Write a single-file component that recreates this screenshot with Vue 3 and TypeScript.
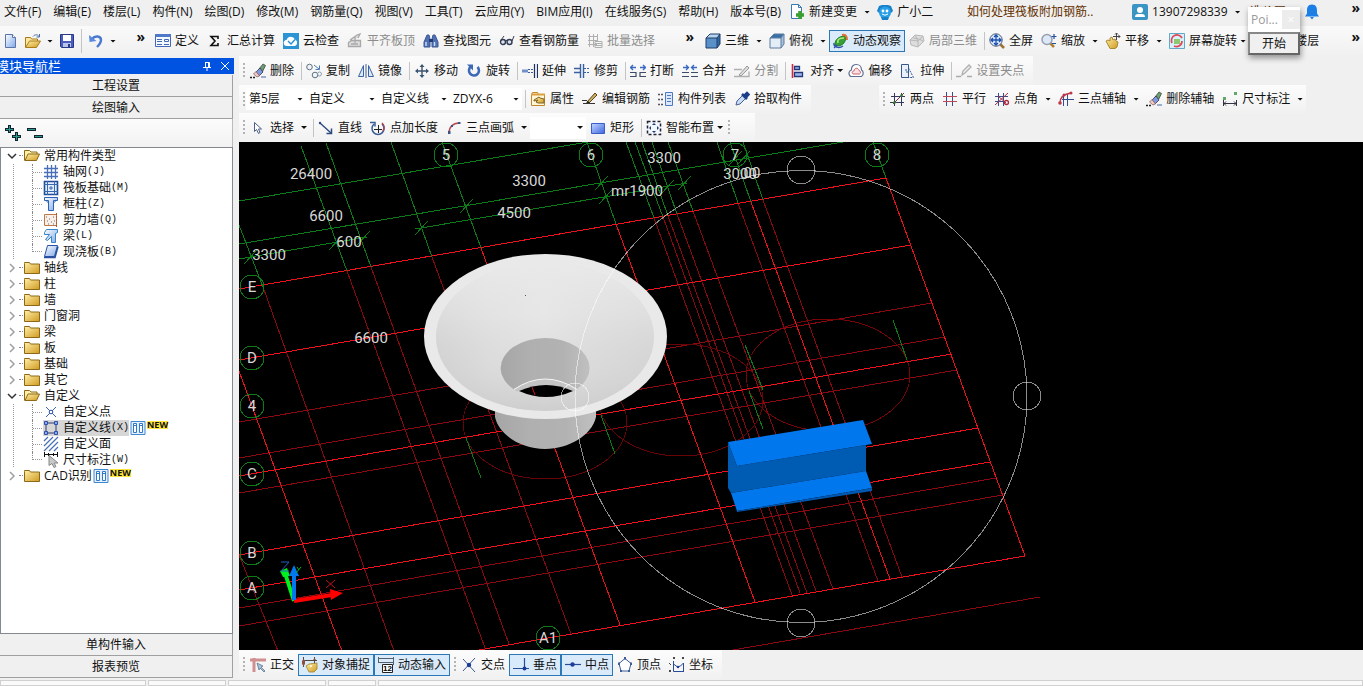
<script setup lang="ts">
interface Tool {
  kind?: 'btn' | 'sep' | 'grip' | 'combo'
  icon?: string
  label?: string
  drop?: 'wide' | 'tight'
  off?: boolean
  on?: boolean
  size?: 'narrow' | 'small' | 'medium'
  name?: string
}
interface Node {
  label: string
  key?: string
  icon: string
  level: 1 | 2
  open?: boolean
  last?: boolean
  selected?: boolean
  fresh?: boolean
}
type Line = [number, number, number, number]

const sep: Tool = { kind: 'sep' }
const grip: Tool = { kind: 'grip' }

const menus = ['文件(F)', '编辑(E)', '楼层(L)', '构件(N)', '绘图(D)', '修改(M)', '钢筋量(Q)', '视图(V)', '工具(T)', '云应用(Y)', 'BIM应用(I)', '在线服务(S)', '帮助(H)', '版本号(B)']

const defineTools: Tool[] = [
  { icon: 'define', label: '定义' },
  { icon: 'sigma', label: '汇总计算' },
  { icon: 'cloud', label: '云检查' },
  { icon: 'flush', label: '平齐板顶', off: true },
  { icon: 'binoc', label: '查找图元' },
  { icon: 'glasses', label: '查看钢筋量' },
  { icon: 'batch', label: '批量选择', off: true },
]
const viewTools: Tool[] = [
  { icon: 'cube', label: '三维', drop: 'wide' },
  { icon: 'topview', label: '俯视', drop: 'wide' },
  { icon: 'orbit', label: '动态观察', on: true },
  { icon: 'part3d', label: '局部三维', off: true },
  sep,
  { icon: 'full', label: '全屏' },
  { icon: 'zoom', label: '缩放', drop: 'wide' },
  { icon: 'pan', label: '平移', drop: 'wide' },
  { icon: 'rotscreen', label: '屏幕旋转', drop: 'tight' },
  { icon: 'floors', label: '选择楼层' },
]
const editTools: Tool[] = [
  grip,
  { icon: 'erase', label: '删除' }, sep,
  { icon: 'copy', label: '复制' },
  { icon: 'mirror', label: '镜像' }, sep,
  { icon: 'move', label: '移动' },
  { icon: 'rotate', label: '旋转' }, sep,
  { icon: 'extend', label: '延伸' },
  { icon: 'trim', label: '修剪' }, sep,
  { icon: 'break', label: '打断' },
  { icon: 'merge', label: '合并' },
  { icon: 'split', label: '分割', off: true }, sep,
  { icon: 'align', label: '对齐', drop: 'tight' },
  { icon: 'offset', label: '偏移' },
  { icon: 'stretch', label: '拉伸' }, sep,
  { icon: 'gripset', label: '设置夹点', off: true },
]
const memberTools: Tool[] = [
  grip,
  { kind: 'combo', label: '第5层', size: 'small', name: '楼层' },
  { kind: 'combo', label: '自定义', size: 'medium', name: '构件类别' },
  { kind: 'combo', label: '自定义线', size: 'medium', name: '构件类型' },
  { kind: 'combo', label: 'ZDYX-6', size: 'medium', name: '构件' },
  sep,
  { icon: 'props', label: '属性' },
  { icon: 'pen', label: '编辑钢筋' },
  { icon: 'list', label: '构件列表' },
  { icon: 'pick', label: '拾取构件' },
]
const axisTools: Tool[] = [
  grip,
  { icon: 'ax2', label: '两点' },
  { icon: 'axpar', label: '平行' },
  { icon: 'axang', label: '点角', drop: 'wide' },
  { icon: 'ax3', label: '三点辅轴', drop: 'wide' },
  { icon: 'erase', label: '删除辅轴' },
  { icon: 'dim', label: '尺寸标注', drop: 'wide' },
]
const drawTools: Tool[] = [
  grip,
  { icon: 'arrow', label: '选择', drop: 'wide' }, sep,
  { icon: 'line', label: '直线' },
  { icon: 'ptlen', label: '点加长度' },
  { icon: 'arc', label: '三点画弧', drop: 'wide' },
  { kind: 'combo', label: '', size: 'narrow', name: '画法' },
  { icon: 'rect', label: '矩形' }, sep,
  { icon: 'smart', label: '智能布置', drop: 'tight' },
  grip,
]
const snapTools: Tool[] = [
  grip,
  { icon: 'ortho', label: '正交' },
  { icon: 'osnap', label: '对象捕捉', on: true },
  { icon: 'dyn', label: '动态输入', on: true },
  grip,
  { icon: 'cross', label: '交点' },
  { icon: 'perp', label: '垂点', on: true },
  { icon: 'mid', label: '中点', on: true },
  { icon: 'penta', label: '顶点' },
  { icon: 'coord', label: '坐标' },
]

const tree: Node[] = [
  { label: '常用构件类型', icon: 'fopen', level: 1, open: true },
  { label: '轴网', key: '(J)', icon: 'tgrid', level: 2 },
  { label: '筏板基础', key: '(M)', icon: 'traft', level: 2 },
  { label: '框柱', key: '(Z)', icon: 'tcol', level: 2 },
  { label: '剪力墙', key: '(Q)', icon: 'twall', level: 2 },
  { label: '梁', key: '(L)', icon: 'tbeam', level: 2 },
  { label: '现浇板', key: '(B)', icon: 'tslab', level: 2, last: true },
  ...['轴线', '柱', '墙', '门窗洞', '梁', '板', '基础', '其它'].map((label): Node => ({ label, icon: 'folder', level: 1 })),
  { label: '自定义', icon: 'fopen', level: 1, open: true },
  { label: '自定义点', icon: 'tpoint', level: 2 },
  { label: '自定义线', key: '(X)', icon: 'tline', level: 2, selected: true, fresh: true },
  { label: '自定义面', icon: 'tface', level: 2 },
  { label: '尺寸标注', key: '(W)', icon: 'tdim', level: 2, last: true },
  { label: 'CAD识别', icon: 'folder', level: 1, fresh: true },
]

const bright: Line[] = [
  [239, 289, 886, 178], [239, 360, 911, 245], [239, 476, 952, 354], [239, 555, 978, 428],
  [239, 590, 990, 462], [473, 651, 1025, 556],
  [886, 178, 1025, 556], [239, 371, 342, 651], [481, 248, 620, 625], [616, 224, 755, 602], [751, 202, 890, 579],
]
const dim: Line[] = [
  [239, 422, 932, 303], [239, 458, 945, 337], [239, 493, 957, 370], [239, 608, 996, 478], [239, 626, 1003, 495],
  [727, 651, 1040, 597], [263, 287, 394, 651], [347, 271, 485, 648], [371, 267, 509, 644], [432, 257, 571, 634],
  [654, 218, 792, 595], [663, 217, 800, 593], [668, 216, 807, 593], [677, 214, 816, 591], [693, 211, 833, 589],
  [738, 203, 878, 581], [763, 200, 902, 577], [239, 555, 278, 651],
]
const green: Line[] = [
  [239, 201, 588, 142], [239, 244, 843, 142], [239, 259, 367, 237], [415, 229, 687, 183],
  [239, 225, 263, 287], [301, 146, 347, 271], [326, 143, 371, 267], [391, 142, 432, 257], [442, 142, 481, 248],
  [587, 142, 616, 224], [626, 142, 654, 218], [635, 142, 663, 217], [642, 142, 668, 216], [652, 142, 677, 214],
  [668, 142, 693, 211], [717, 142, 738, 203], [730, 142, 751, 202], [743, 142, 763, 200], [873, 142, 886, 178],
  [466, 438, 481, 478], [601, 415, 615, 454], [745, 345, 763, 390], [749, 391, 763, 429], [893, 320, 907, 360],
]
const ticks: [number, number][] = [[250, 257], [335, 243], [363, 238], [421, 228], [466, 206], [601, 183], [605, 197], [667, 187], [684, 183], [735, 158], [743, 158]]
const dims: [string, number, number][] = [
  ['26400', 311, 174], ['3300', 529, 181], ['6600', 326, 216], ['4500', 514, 213], ['600', 349, 242],
  ['3300', 269, 255], ['3300', 664, 158], ['6600', 371, 338], ['3000', 740, 174], ['00', 752, 173],
  ['mr1900', 637, 191],
]
const bubbles: [string, number, number][] = [
  ['5', 446, 155], ['6', 591, 155], ['7', 735, 155], ['8', 877, 155], ['E', 252, 287], ['D', 252, 358],
  ['4', 252, 406], ['C', 252, 474], ['B', 252, 553], ['A', 252, 588], ['A1', 548, 638],
]
const handles: [number, number][] = [[801, 170], [801, 623], [1027, 396], [575, 397]]

const bars = [
  { id: 'edit', groups: [editTools] },
  { id: 'member', groups: [memberTools, axisTools] },
  { id: 'draw', groups: [drawTools] },
]
</script>

<template>
  <svg class="defs" aria-hidden="true">
    <defs>
      <linearGradient id="gold" x1="0" y1="0" x2="1" y2="1"><stop offset="0" stop-color="#fff0a8" /><stop offset="1" stop-color="#d09a20" /></linearGradient>
      <linearGradient id="azure" x1="0" y1="0" x2="1" y2="1"><stop offset="0" stop-color="#fff" /><stop offset="1" stop-color="#7fa8e8" /></linearGradient>
      <linearGradient id="blue" x1="0" y1="0" x2="1" y2="1"><stop offset="0" stop-color="#c4d8ff" /><stop offset="1" stop-color="#3c64e0" /></linearGradient>
    </defs>
    <symbol id="new" viewBox="0 0 16 16"><path d="M2.500 1.500h7l3 3v10h-10z" fill="url(#azure)" stroke="#5a74a8" /><path d="M9.500 1.500v3h3" fill="#fff" stroke="#5a74a8" /></symbol>
    <symbol id="open" viewBox="0 0 16 16"><path d="M.5 14V4.500h5l1 1.500h6v3" fill="#ffe9a0" stroke="#a87a18" /><path d="M.5 14.500l4-6.500h11l-4 6.500z" fill="url(#gold)" stroke="#a87a18" /><path d="M8 3.500c2-2.500 5-2 6 0M14.500 1v3h-3" fill="none" stroke="#4a6aa8" /></symbol>
    <symbol id="save" viewBox="0 0 16 16"><path d="M1.500 1.500h13v13h-12l-1-1z" fill="#4a5cc0" stroke="#283888" /><path d="M4 2h8v6H4z" fill="#fff" /><path d="M4 10h8v4H4z" fill="#b8c4e8" /><path d="M9 11h2v3H9z" fill="#283888" /></symbol>
    <symbol id="undo" viewBox="0 0 16 16"><path d="M4 6c3-4 9-3 9 1 0 3-2 5-4 7" fill="none" stroke="#4a78d0" stroke-width="2.400" /><path d="M1 2l.5 7 7-1z" fill="#5a8ae0" /></symbol>
    <symbol id="change" viewBox="0 0 16 16"><path d="M2.500.5h7l3 3v11h-10z" fill="#fff" stroke="#3a7ab0" /><path d="M9.500.5v3h3" fill="none" stroke="#3a7ab0" /><path d="M11 7v8M7 11h8" stroke="#3aa030" stroke-width="3.500" /></symbol>
    <symbol id="mascot" viewBox="0 0 16 16"><path d="M2 2l3-1h6l3 1 2 5-2 2H2L0 7z" fill="#1a80c8" /><circle cx="8" cy="8.500" r="6" fill="#28a0e8" /><circle cx="6" cy="7" r="1.400" fill="#fff" /><circle cx="10" cy="7" r="1.400" fill="#fff" /><path d="M5 10q3 2.500 6 0" stroke="#fff" fill="none" /><path d="M4 13l1 3h6l1-3z" fill="#1a80c8" /></symbol>
    <symbol id="user" viewBox="0 0 16 16"><rect width="16" height="16" rx="2" fill="#3a94c4" /><circle cx="8" cy="6" r="3" fill="#fff" /><path d="M3 13q0-3 3-3h4q3 0 3 3z" fill="#fff" /></symbol>
    <symbol id="bell" viewBox="0 0 16 16"><path d="M8 .5c-4 0-5 3-5 6v3l-2 3h14l-2-3v-3c0-3-1-6-5-6zM6 13h4l-2 2.500z" fill="#1c7fe6" /></symbol>
    <symbol id="define" viewBox="0 0 16 16"><path d="M.5 1.500h15v12H.5z" fill="#f4f8ff" stroke="#4468b8" /><path d="M0 1h16v3H0z" fill="#5078c8" /><path d="M2 6.500h5M2 8.500h5M2 11.500h5M9 11.500h5" stroke="#4468b8" /><path d="M9.500 6.500h4v2h-4z" fill="none" stroke="#4468b8" /></symbol>
    <symbol id="sigma" viewBox="0 0 16 16"><path d="M11 6V3.500H4L8 8l-4 4.500h7V10" fill="none" stroke="#111" stroke-width="1.600" /></symbol>
    <symbol id="cloud" viewBox="0 0 16 16"><rect width="16" height="16" fill="#2a94d4" /><path d="M4 13a3 3 0 0 1-.5-6 4.500 4.500 0 0 1 8.500-.5A3.500 3.500 0 0 1 12 13z" fill="#fff" /><path d="M5 8l3 3 4-4.500" fill="none" stroke="#2a94d4" stroke-width="1.500" /></symbol>
    <symbol id="flush" viewBox="0 0 16 16"><path d="M1.500 9.500l3-2h9v6h-12zM3 7l7-5 3-1-2 4M8 4v6M4 11h7" fill="#ddd" stroke="#a8a8a8" stroke-width="1.300" /></symbol>
    <symbol id="binoc" viewBox="0 0 16 16"><path d="M4 2h2l1 4v8H1V9zM10 2h2l3 7v5H9V6z" fill="#5070b0" stroke="#3c5898" /><path d="M6 6h4v3H6z" fill="#203c78" /><path d="M3 9v4M11.500 9v4" stroke="#c8d8f8" stroke-width="1.500" /></symbol>
    <symbol id="glasses" viewBox="0 0 16 16"><circle cx="4" cy="9" r="2.500" fill="#dce4f0" stroke="#333c50" stroke-width="1.400" /><circle cx="10.500" cy="9" r="2.500" fill="#dce4f0" stroke="#333c50" stroke-width="1.400" /><path d="M6 8l2.500-1M2 7l3-4M13 8l2-5" fill="none" stroke="#333c50" /></symbol>
    <symbol id="batch" viewBox="0 0 16 16"><path d="M1 3.500h9M1 7.500h9M1 11.500h9M2.500 1v13M6.500 1v13M10.500 1v8M8 8.500h7v6H8zM8 10.500h7M8 12.500h7" fill="none" stroke="#b0b0b0" /></symbol>
    <symbol id="cube" viewBox="0 0 16 16"><path d="M1 5l4-4h10l-3 4z" fill="#b8d4f0" /><path d="M1 5h11v10H1z" fill="#5a90c8" /><path d="M12 5l3-4v10l-3 4z" fill="#3468a0" /><path d="M1 5l4-4h10v10l-3 4H1zM1 5h11v10M12 5l3-4" fill="none" stroke="#1c3c68" /></symbol>
    <symbol id="topview" viewBox="0 0 16 16"><path d="M1 5l4-4h10l-3 4z" fill="#3a70a8" /><path d="M1 5h11v10H1z" fill="#e4eef8" /><path d="M12 5l3-4v10l-3 4z" fill="#a8c0d8" /><path d="M1 5l4-4h10v10l-3 4H1zM1 5h11v10M12 5l3-4" fill="none" stroke="#5c7ca0" /></symbol>
    <symbol id="orbit" viewBox="0 0 16 16"><path d="M2 13C1 7 6 3 12 3c2 5-2 10-8 10z" fill="#35a035" stroke="#207828" /><path d="M5 10c-1-4 2-5 6-5" fill="none" stroke="#b0e880" stroke-width="1.500" /><path d="M9 2q5-1 5 5" stroke="#e07030" stroke-width="2" fill="none" /><path d="M1 10c-1 4 5 6 9 3M1 15l3-3" stroke="#3050b0" fill="none" stroke-width="1.300" /></symbol>
    <symbol id="part3d" viewBox="0 0 16 16"><path d="M1 7l5-5 8 1 1 5-6 6-7-2z" fill="#ddd" stroke="#b8b8b8" /><path d="M6 2l3 6v6M1 7l8 1 5-5M4 5l6 1 4 2" fill="none" stroke="#b8b8b8" /></symbol>
    <symbol id="full" viewBox="0 0 16 16"><path d="M11 11l4 4" stroke="#a07030" stroke-width="2.500" /><circle cx="7" cy="7" r="6.200" fill="#e0edff" stroke="#4a5878" /><path d="M7 2v10M2 7h10M5 4l2-2 2 2M5 10l2 2 2-2M4 5L2 7l2 2M10 5l2 2-2 2" fill="none" stroke="#1c50b0" stroke-width="1.300" /></symbol>
    <symbol id="zoom" viewBox="0 0 16 16"><path d="M9 10l4 4" stroke="#b08030" stroke-width="2.500" /><circle cx="6" cy="6.500" r="5" fill="#dce8f8" stroke="#98a0b0" stroke-width="1.500" /><path d="M13 1v5M10.500 3.500h5M11 10.500h4" stroke="#2050a0" stroke-width="1.200" /></symbol>
    <symbol id="pan" viewBox="0 0 16 16"><path d="M1 8l2-1 2 1V5l2-1 1 3 2-1 1 2 2 1-1 5-2 1.500H5z" fill="url(#gold)" stroke="#a88830" /><path d="M11.500 0v7M8 3.500h7M10 1.500L11.500 0 13 1.500M13.500 2L15 3.500 13.500 5" stroke="#444" fill="none" /></symbol>
    <symbol id="rotscreen" viewBox="0 0 16 16"><path d="M.5.5h15v15H.5z" fill="#d8f0f8" stroke="#60a8c8" /><path d="M5 6h6v5H5z" fill="#8cc870" /><path d="M3 10A5.500 5.500 0 0 1 13 5M13 8A5.500 5.500 0 0 1 5 13" fill="none" stroke="#e04858" stroke-width="1.700" /></symbol>
    <symbol id="floors" viewBox="0 0 16 16"><path d="M1 5l7-4 7 4-7 4zM1 10l7 4 7-4" fill="#b8d0f0" stroke="#4868a8" /></symbol>
    <symbol id="erase" viewBox="0 0 16 16"><path d="M0 14.500h6" stroke="#222" stroke-width="1.300" stroke-dasharray="2 1" /><path d="M11 13.500h5v1h-5z" fill="#4468a8" /><path d="M9 6l4-5 2.500 1.500-3 6z" fill="#68a070" stroke="#444" stroke-width=".8" /><path d="M6 9l4-4 3 4-4 4z" fill="#8098e0" stroke="#334" stroke-width=".8" /><path d="M3.500 11L6 8.500 9.500 13 7 14z" fill="#f4c8c0" stroke="#866" stroke-width=".8" /></symbol>
    <symbol id="copy" viewBox="0 0 16 16"><circle cx="3.500" cy="4" r="2.800" fill="#f0f4f8" stroke="#607080" /><circle cx="9" cy="12" r="2.800" fill="#f0f4f8" stroke="#607080" /><circle cx="13.500" cy="11" r="2" fill="none" stroke="#90a0b0" /><path d="M8 2l5 4M13.500 2.500v4h-4" fill="none" stroke="#4878b8" /></symbol>
    <symbol id="mirror" viewBox="0 0 16 16"><path d="M5.500 2.500v11h-5zM10.500 2.500v11h5z" fill="#dce8f8" stroke="#3c64a0" /><path d="M8 1v14" stroke="#3c64a0" /></symbol>
    <symbol id="move" viewBox="0 0 16 16"><path d="M8 2v12M2 8h12" stroke="#3c5470" stroke-width="1.400" /><path d="M5.500 4L8 1l2.500 3zM5.500 12L8 15l2.500-3zM4 5.500L1 8l3 2.500zM12 5.500L15 8l-3 2.500z" fill="#3c5470" /></symbol>
    <symbol id="rotate" viewBox="0 0 16 16"><path d="M5 3.500A5 5 0 1 0 11.500 4" fill="none" stroke="#3c68b8" stroke-width="2.600" /><path d="M1 1.500h6v6z" fill="#3c68b8" /></symbol>
    <symbol id="extend" viewBox="0 0 16 16"><path d="M0 6.500h6v3H0z" fill="#7090c8" /><path d="M6 6.500h5M6 9.500h5" stroke="#3c5ca0" stroke-dasharray="2 1" /><path d="M12.500 1v14M15.500 1v14" stroke="#203060" stroke-width="1.200" /></symbol>
    <symbol id="trim" viewBox="0 0 16 16"><path d="M0 5.500h6M0 9.500h6M6.500 1v14M9.500 1v14" stroke="#3860a0" stroke-width="1.400" /><path d="M10 5.500h5M10 9.500h5" stroke="#3860a0" stroke-dasharray="2 1" /></symbol>
    <symbol id="break" viewBox="0 0 16 16"><path d="M0 9.500h6v4H0M16 9.500h-6v4h6" fill="none" stroke="#3c4c68" stroke-width="1.200" /><path d="M1 4.500h5M10 4.500h5M3 2L.5 4.500 3 7M13 2l2.500 2.500L13 7" fill="none" stroke="#3868c0" stroke-width="1.300" /></symbol>
    <symbol id="merge" viewBox="0 0 16 16"><path d="M0 9.500h7M0 13.500h7M9 9.500h7M9 13.500h7" stroke="#3c4c68" stroke-width="1.200" /><path d="M1 4.500h5M10 4.500h5M4 2l2.500 2.500L4 7M12 2L9.500 4.500 12 7" fill="none" stroke="#3868c0" stroke-width="1.300" /></symbol>
    <symbol id="split" viewBox="0 0 16 16"><path d="M0 6.500h8M0 13.500h15v-5" fill="none" stroke="#b0b0b0" stroke-width="1.400" /><path d="M5 12l8-9 2 2-8 8z" fill="#ddd" stroke="#999" /></symbol>
    <symbol id="align" viewBox="0 0 16 16"><path d="M2.500 1v14" stroke="#d02840" stroke-width="1.600" /><path d="M4.500 3.500h5v3h-5zM4.500 9.500h8v4h-8z" fill="#a0b8e8" stroke="#20387c" stroke-width="1.300" /></symbol>
    <symbol id="offset" viewBox="0 0 16 16"><path d="M2.500 13.500c-3-3-1-6 1-6.500C3 3 6 1.500 8.500 1.500s5 2 5 5.500c2 1 2.500 5 0 6.500z" fill="#fff" stroke="#607090" stroke-width="1.200" /><path d="M5 11c-2-2 0-3 1-3 0-3 4-4 5-.5 2 .5 2 3 .5 3.500z" fill="#fbe0e0" stroke="#d06070" /></symbol>
    <symbol id="stretch" viewBox="0 0 16 16"><path d="M1.500 1.500h7v13h-7z" fill="#e8f0fc" stroke="#38588c" /><path d="M8.500 5l5 9.500H8M6 6v3h2" fill="none" stroke="#38588c" stroke-dasharray="2 1" /></symbol>
    <symbol id="gripset" viewBox="0 0 16 16"><path d="M0 13.500h5M11 13.500h5" stroke="#aaa" stroke-width="1.500" /><path d="M6 12l1-4 6-6 2 2-6 6z" fill="#eee" stroke="#b0b0b0" stroke-width="1.300" /></symbol>
    <symbol id="props" viewBox="0 0 16 16"><path d="M1.500 3.500l1-2h5l1 2h6v11h-13z" fill="#fff6d8" stroke="#c08828" /><path d="M1 3.500h14" stroke="#d8a040" stroke-width="2" /><path d="M4 9l5-3 1 1 4 1v4H8l-2-1 2-2-4 1z" fill="url(#gold)" stroke="#806028" /></symbol>
    <symbol id="pen" viewBox="0 0 16 16"><path d="M0 9.500h5M1 12.500h12" stroke="#333" /><path d="M5 11l8-9 2 2-8 8z" fill="#c8b060" stroke="#5c4420" /><path d="M4 12l2-2 2 2z" fill="#222" /></symbol>
    <symbol id="list" viewBox="0 0 16 16"><path d="M0 3.500h5M0 8.500h5M0 13.500h5" stroke="#556" stroke-width="1.500" stroke-dasharray="2 1" /><path d="M7.500 1.500h7v13h-7z" fill="#dce8fc" stroke="#5078c0" /><path d="M9 4.500h4M9 7.500h4M9 10.500h4" stroke="#5078c0" /></symbol>
    <symbol id="pick" viewBox="0 0 16 16"><path d="M2 14l1-4 6-6 3 3-6 6z" fill="#c8dcf8" stroke="#486090" /><path d="M8 3l5 5M10 5l3-3 1.500 1.500-3 3" stroke="#1c3c88" stroke-width="2.600" fill="none" /></symbol>
    <symbol id="ax2" viewBox="0 0 16 16"><path d="M4.500 2v13M11.500 2v13M1 5.500h14M0 11.500h14" stroke="#333a5c" /><path d="M3 13L14 2" stroke="#803040" /><circle cx="4.500" cy="11.500" r="1.300" fill="#308030" /><circle cx="11.500" cy="4.500" r="1.300" fill="#308030" /></symbol>
    <symbol id="axpar" viewBox="0 0 16 16"><path d="M4.500 1v14M10.500 1v14" stroke="#34508c" /><path d="M1 5.500h14M1 10.500h14" stroke="#c04858" /></symbol>
    <symbol id="axang" viewBox="0 0 16 16"><path d="M4.500 2v13M9.500 2v13M1 5.500h13M1 10.500h9" stroke="#34508c" /><path d="M1 14L14 2M4 5l8 7" stroke="#b02840" /><circle cx="12.500" cy="11.500" r="2" fill="none" stroke="#b02840" stroke-width="1.300" /></symbol>
    <symbol id="ax3" viewBox="0 0 16 16"><path d="M9.500 3v12M4 8.500h12M5.500 5v10" stroke="#34508c" /><path d="M2 12C2 6 6 3 13 2" fill="none" stroke="#c03848" stroke-width="1.300" /><circle cx="2" cy="12" r="1.800" fill="#c03848" /><circle cx="6" cy="4" r="1.500" fill="#c03848" /><circle cx="13" cy="2" r="1.500" fill="#c03848" /></symbol>
    <symbol id="dim" viewBox="0 0 16 16"><path d="M1.500 9v6M14.500 9v6M2 12.500h12M4 10.500l-2 2 2 2M12 10.500l2 2-2 2" fill="none" stroke="#334" /><path d="M1 6h3v3H1zM12 1h3v3h-3z" fill="#60a868" /></symbol>
    <symbol id="arrow" viewBox="0 0 16 16"><path d="M4.500 2.500v9l2-2 2 4 1.500-1-1.500-3.500h3z" fill="#fff" stroke="#4c6088" /></symbol>
    <symbol id="line" viewBox="0 0 16 16"><path d="M2 3l11 10" stroke="#2c4880" stroke-width="1.400" /><path d="M13.500 8.500v5h-5" fill="none" stroke="#2c4880" stroke-width="1.500" /><circle cx="2" cy="3" r="1.200" fill="#2c4880" /></symbol>
    <symbol id="ptlen" viewBox="0 0 16 16"><path d="M4 4A6 6 0 1 0 12 4" fill="none" stroke="#3c5c98" stroke-width="1.500" /><path d="M0 2.500h5v4" fill="none" stroke="#3c5c98" stroke-width="1.500" /><path d="M4 9.500h8M8.500 5v8" stroke="#222" /><path d="M12 3a6 6 0 0 1 1 8" stroke="#b04050" stroke-width="1.500" fill="none" /></symbol>
    <symbol id="arc" viewBox="0 0 16 16"><path d="M3 13C3 7 7 3 13 3" fill="none" stroke="#b84850" stroke-width="1.400" /><path d="M2 11h2.500v3H2zM5 5h2v2H5zM12 2h2.500v2H12z" fill="#3c5480" /></symbol>
    <symbol id="rect" viewBox="0 0 16 16"><path d="M1.500 3.500h13v10h-13z" fill="url(#blue)" stroke="#3c5cc8" /></symbol>
    <symbol id="smart" viewBox="0 0 16 16"><path d="M1.500 1.500h13v13h-13z" fill="#f4f8ff" stroke="#223" stroke-width="1.500" stroke-dasharray="3 2" /><path d="M6 5l2-2 2 2zM6 11l2 2 2-2zM5 6L3 8l2 2zM11 6l2 2-2 2z" fill="#223c78" /></symbol>
    <symbol id="ortho" viewBox="0 0 16 16"><path d="M0 3h16M4 1v14" stroke="#d09090" stroke-width="3" /><path d="M7 6l6 3-2 1 4 4-1 1-4-4-1 2z" fill="#a8c0d8" stroke="#607890" stroke-width=".8" /></symbol>
    <symbol id="osnap" viewBox="0 0 16 16"><path d="M1 3.500h14M1.500 0v10M12.500 0v8" stroke="#504840" /><path d="M0 4l1.500-2L3 4v3L1.500 9 0 7zM11 3l1.500-2L14 3" fill="#905040" /><path d="M4 9l3-2 8-1v6l-3 3H7z" fill="url(#gold)" stroke="#a08030" stroke-width=".8" /><circle cx="9" cy="9" r="1" fill="#fff" /></symbol>
    <symbol id="dyn" viewBox="0 0 16 16"><path d="M.5 0v5M15.500 0v8M0 1.500h16M0 5.500h16" stroke="#56606c" /><path d="M4.500 7.500h10v8h-10z" fill="#fff" stroke="#222" /></symbol>
    <symbol id="cross" viewBox="0 0 16 16"><path d="M2 2l12 13M14 1L2 14" stroke="#405890" /><circle cx="8" cy="8" r="2.200" fill="#1c3c98" /></symbol>
    <symbol id="perp" viewBox="0 0 16 16"><path d="M0 11.500h16M11.500 1v10" stroke="#284c98" stroke-width="1.200" /><circle cx="11.500" cy="11.500" r="2" fill="#1c3c98" /></symbol>
    <symbol id="mid" viewBox="0 0 16 16"><path d="M0 7.500h16" stroke="#284c98" stroke-width="1.200" /><circle cx="7.500" cy="7.500" r="2.200" fill="#1c3c98" /></symbol>
    <symbol id="penta" viewBox="0 0 16 16"><path d="M8 1.500l6 5-2 7.500H4L2 6.500z" fill="#fff" stroke="#3c5c98" /><path d="M7 0h2v2.500H7zM1 5.500h2V8H1zM13 5.500h2V8h-2zM3 13h2v2H3zM11 13h2v2h-2z" fill="#3c5c98" /></symbol>
    <symbol id="coord" viewBox="0 0 16 16"><path d="M4.500 4v10.500H15M4.500 7l4 3 3-1 3-3v8" fill="none" stroke="#284c98" /><path d="M4 0l2 2M6 0L4 2M13 0l2 2M15 0l-2 2M0 6l2 2M0 13l2 2M2 13l-2 2" stroke="#333" stroke-width=".9" /><circle cx="9" cy="10" r="1.200" fill="#1c3c98" /></symbol>
    <symbol id="folder" viewBox="0 0 16 16"><path d="M.5 3.500v-1h5l1 1.500h9v9.500H.5z" fill="url(#gold)" stroke="#8c6818" /></symbol>
    <symbol id="fopen" viewBox="0 0 16 16"><path d="M.5 12.500v-10h5l1.500 1.500h6v2" fill="#fff0a8" stroke="#8c6818" /><path d="M1 12.500l3-6.500h11.500l-3 6.500z" fill="url(#gold)" stroke="#8c6818" /></symbol>
    <symbol id="tgrid" viewBox="0 0 16 16"><path d="M4.500 1v14M8.500 1v14M12.500 1v14M1 4.500h14M1 8.500h14M1 12.500h14" stroke="#4870b8" stroke-width="1.300" /></symbol>
    <symbol id="traft" viewBox="0 0 16 16"><path d="M1.500 1.500h13v13h-13z" fill="#e4eefc" stroke="#204c98" stroke-width="1.600" /><path d="M1 4.500h14M1 11.500h14M4.500 1v14M11.500 1v14M6 8h4M8 6v4" stroke="#3868b0" /></symbol>
    <symbol id="tcol" viewBox="0 0 16 16"><path d="M1.500 1.500h13v3h-4v10h-5v-10h-4z" fill="url(#azure)" stroke="#2c60b8" /><path d="M3 4.500L5.500 7M13 4.500L10.500 7" stroke="#2c60b8" /></symbol>
    <symbol id="twall" viewBox="0 0 16 16"><path d="M1.500 2.500h12v11h-12z" fill="#fbeee4" stroke="#c07848" /><path d="M3 5h1M6 7h1M10 5h1M4 9h1M8 10h1M11 9h1M5 12h1M10 12h1" stroke="#507090" /><path d="M13.500 1v14" stroke="#b05830" stroke-dasharray="2 1" /></symbol>
    <symbol id="tbeam" viewBox="0 0 16 16"><path d="M1.500 4.500l2-3h11v3l-2 1v9h-4v-6l-4 4-2-1 4-5h-5z" fill="url(#azure)" stroke="#3484c8" /></symbol>
    <symbol id="tslab" viewBox="0 0 16 16"><path d="M4.500 1.500h10l-3 11h-10z" fill="url(#azure)" stroke="#2850a0" /><path d="M1 13.500h11l3-11" fill="none" stroke="#2850a0" stroke-width="1.500" /></symbol>
    <symbol id="tpoint" viewBox="0 0 16 16"><path d="M3 3l10 10M13 3L3 13" stroke="#4060b0" /><circle cx="8" cy="8" r="1.800" fill="#fff" stroke="#3050a8" /></symbol>
    <symbol id="tline" viewBox="0 0 16 16"><path d="M3 3h10v10H3z" fill="none" stroke="#283c78" /><path d="M1.500 1.500h3v3h-3zM11.500 1.500h3v3h-3zM1.500 11.500h3v3h-3zM11.500 11.500h3v3h-3z" fill="#90a8f0" stroke="#3050a8" /></symbol>
    <symbol id="tface" viewBox="0 0 16 16"><path d="M1 5l4-4M1 10L10 1M1 15L15 1M6 15l9-9M11 15l4-4" stroke="#4870b8" stroke-width="1.200" /></symbol>
    <symbol id="tdim" viewBox="0 0 16 16"><path d="M1.500 0v5M14.500 0v5M2 2.500h12M5.500 1v3M10.500 1v3" stroke="#111" /><path d="M6 3.500v10l3-2 2 4 2-1-2-3.500h4z" fill="#c8c8c8" stroke="#888" /></symbol>
    <symbol id="book" viewBox="0 0 16 16"><path d="M1 1.500h14v13H1z" fill="#e4f0ff" stroke="#4088d0" /><path d="M3.500 3.500h3v9h-3zM9.500 3.500h3v9h-3z" fill="#fff" stroke="#3078c8" /><path d="M3 5.500h4M9 5.500h4" stroke="#3078c8" /></symbol>
    <symbol id="plus2" viewBox="0 0 16 16"><path d="M4.500 0v8M0 4.500h9M11.500 7v9M7 11.500h9" stroke="#123" stroke-width="3" /><path d="M4.500 1v6M1 4.500h7M11.500 8v7M8 11.500h7" stroke="#2c9c88" /></symbol>
    <symbol id="minus2" viewBox="0 0 16 16"><path d="M0 4.500h9M7 11.500h9" stroke="#123" stroke-width="3" /><path d="M1 4.500h7M8 11.500h7" stroke="#2c9c88" /></symbol>
  </svg>

  <div class="app">
    <header class="head">
      <div class="menubar">
        <nav class="menus"><button v-for="m in menus" :key="m" type="button" class="menu">{{ m }}</button></nav>
        <div class="account">
          <button type="button" class="btn"><svg class="ico"><use href="#change" /></svg>新建变更</button>
          <i class="caret"></i>
          <button type="button" class="btn"><svg class="ico"><use href="#mascot" /></svg>广小二</button>
        </div>
        <a class="tip" href="#">如何处理筏板附加钢筋..</a>
        <div class="user">
          <button type="button" class="btn"><svg class="ico"><use href="#user" /></svg>13907298339</button>
          <i class="caret"></i>
        </div>
        <a class="beans" href="#">造价豆</a>
        <button type="button" class="icon-btn" aria-label="通知"><svg class="ico"><use href="#bell" /></svg></button>
        <span class="more end">»</span>
      </div>
      <div class="toolbar">
        <div class="group files">
          <button type="button" class="icon-btn" aria-label="新建"><svg class="ico"><use href="#new" /></svg></button>
          <button type="button" class="icon-btn" aria-label="打开"><svg class="ico"><use href="#open" /></svg></button>
          <i class="caret"></i>
          <button type="button" class="icon-btn" aria-label="保存"><svg class="ico"><use href="#save" /></svg></button>
          <i class="sep"></i>
          <button type="button" class="icon-btn" aria-label="撤销"><svg class="ico"><use href="#undo" /></svg></button>
          <i class="caret"></i>
          <span class="more end">»</span>
        </div>
        <div class="group defines">
          <button v-for="t in defineTools" :key="t.label" type="button" class="btn" :class="{ off: t.off }"><svg class="ico"><use :href="'#' + t.icon" /></svg>{{ t.label }}</button>
          <span class="more end">»</span>
        </div>
        <div class="group views">
          <template v-for="(t, i) in viewTools" :key="i">
            <i v-if="t.kind === 'sep'" class="sep"></i>
            <template v-else>
              <button type="button" class="btn" :class="{ off: t.off, on: t.on, tight: t.drop === 'tight' }"><svg class="ico"><use :href="'#' + t.icon" /></svg>{{ t.label }}</button>
              <i v-if="t.drop" class="caret"></i>
            </template>
          </template>
          <span class="more end">»</span>
        </div>
      </div>
      <div class="popup">
        <div class="popup-title"><span>Poi...</span><button type="button" class="popup-x" aria-label="关闭">×</button></div>
        <button type="button" class="popup-go">开始</button>
      </div>
    </header>

    <div class="body">
      <aside class="side">
        <div class="side-title">
          <span class="side-name">模块导航栏</span>
          <svg class="side-ico" viewBox="0 0 10 10"><path d="M3 1.500h4.500V6M3.500 1v5M6.500 1v5M1 6.500h8M5 7v3" fill="none" stroke="#fff" /></svg>
          <svg class="side-ico" viewBox="0 0 10 10"><path d="M1 1l8 8M9 1L1 9" fill="none" stroke="#fff" /></svg>
        </div>
        <button type="button" class="side-btn">工程设置</button>
        <button type="button" class="side-btn">绘图输入</button>
        <div class="side-strip">
          <button type="button" class="icon-btn" aria-label="全部展开"><svg class="ico"><use href="#plus2" /></svg></button>
          <button type="button" class="icon-btn" aria-label="全部折叠"><svg class="ico"><use href="#minus2" /></svg></button>
        </div>
        <ul class="tree">
          <li v-for="(n, i) in tree" :key="i" class="node" :class="['lv' + n.level, { last: n.last }]">
            <svg v-if="n.level === 1" class="twist" :class="{ open: n.open }" viewBox="0 0 10 10"><path :d="n.open ? 'M1 3l4 4 4-4' : 'M3 1l4 4-4 4'" /></svg>
            <span class="stub"></span>
            <span class="cap" :class="{ sel: n.selected }"><svg class="ico"><use :href="'#' + n.icon" /></svg><span class="txt">{{ n.label }}<span v-if="n.key" class="key">{{ n.key }}</span></span></span>
            <template v-if="n.fresh"><svg class="ico book"><use href="#book" /></svg><b class="fresh">NEW</b></template>
          </li>
        </ul>
        <button type="button" class="side-btn">单构件输入</button>
        <button type="button" class="side-btn">报表预览</button>
      </aside>

      <main class="main">
        <div v-for="bar in bars" :key="bar.id" class="bar">
          <div v-for="(g, gi) in bar.groups" :key="gi" class="strip" :class="bar.id + gi">
            <template v-for="(t, i) in g" :key="i">
              <i v-if="t.kind === 'sep'" class="sep"></i>
              <i v-else-if="t.kind === 'grip'" class="grip"></i>
              <label v-else-if="t.kind === 'combo'" class="combo" :class="t.size"><select :aria-label="t.name"><option>{{ t.label }}</option></select><i class="caret"></i></label>
              <template v-else>
                <button type="button" class="btn" :class="{ off: t.off, on: t.on, tight: t.drop === 'tight' }"><svg class="ico"><use :href="'#' + t.icon" /></svg>{{ t.label }}</button>
                <i v-if="t.drop" class="caret"></i>
              </template>
            </template>
          </div>
        </div>

        <svg class="scene" role="img" aria-label="三维视图">
          <defs>
            <linearGradient id="bowl" x1="0" y1="0" x2="1" y2="0"><stop offset="0" stop-color="#d2d2d2" /><stop offset=".25" stop-color="#e0e0e0" /><stop offset=".5" stop-color="#e7e7e7" /><stop offset=".7" stop-color="#dfdfdf" /><stop offset="1" stop-color="#d6d6d6" /></linearGradient>
            <linearGradient id="shade" x1="0" y1="0" x2="0" y2="1"><stop offset="0" stop-color="#e9e9e9" stop-opacity="1" /><stop offset=".35" stop-color="#e6e6e6" stop-opacity=".5" /><stop offset=".7" stop-color="#d0d0d0" stop-opacity=".3" /><stop offset="1" stop-color="#c8c8c8" stop-opacity=".8" /></linearGradient>
            <linearGradient id="tube" x1="0" y1="0" x2="1" y2="0"><stop offset="0" stop-color="#a6a6a6" /><stop offset=".35" stop-color="#b0b0b0" /><stop offset=".7" stop-color="#b2b2b2" /><stop offset="1" stop-color="#c0c0c0" /></linearGradient>
          </defs>
          <g transform="translate(-239 -142)">
            <g class="thin">
              <line v-for="(l, i) in dim" :key="'d' + i" :x1="l[0]" :y1="l[1]" :x2="l[2]" :y2="l[3]" stroke="#8c0810" />
              <ellipse cx="545" cy="423" rx="82" ry="56" stroke="#680408" />
              <ellipse cx="681" cy="400" rx="82" ry="56" stroke="#680408" />
              <ellipse cx="828" cy="375" rx="82" ry="56" stroke="#780408" />
              <line v-for="(l, i) in bright" :key="'b' + i" :x1="l[0]" :y1="l[1]" :x2="l[2]" :y2="l[3]" stroke="#f0101c" />
              <line v-for="(l, i) in green" :key="'g' + i" :x1="l[0]" :y1="l[1]" :x2="l[2]" :y2="l[3]" stroke="#0c7c18" />
              <line v-for="(t, i) in ticks" :key="'t' + i" :x1="t[0] - 6" :y1="t[1] + 7" :x2="t[0] + 7" :y2="t[1] - 7" stroke="#0c7c18" />
              <circle v-for="(b, i) in bubbles" :key="'c' + i" :cx="b[1]" :cy="b[2]" r="12" stroke="#0c7c18" />
            </g>
            <g class="cad">
              <text v-for="(d, i) in dims" :key="'n' + i" :x="d[1]" :y="d[2] + 5">{{ d[0] }}</text>
              <text v-for="(b, i) in bubbles" :key="'l' + i" :x="b[1]" :y="b[2] + 5">{{ b[0] }}</text>
            </g>

            <path d="M495 405v12c4 18 26 32 50 32s47-14 51-32v-12z" fill="url(#tube)" />
            <ellipse cx="545.500" cy="336.500" rx="121.500" ry="82.500" fill="#e9e9e9" />
            <ellipse cx="545" cy="337" rx="109" ry="74" fill="url(#bowl)" />
            <ellipse cx="545" cy="337" rx="109" ry="74" fill="url(#shade)" />
            <path d="M514 389.500A44.500 30 0 1 1 577 389q-31-20-63 0z" fill="url(#tube)" />
            <path d="M514 389.500q31-21 63 0l-3 2q-29-10-57 0z" fill="#c4c4c4" />
            <path d="M514 389.500q31-21 63 0" fill="none" stroke="#f4f4f4" />
            <path d="M519 391q27-12 54 0-27 12-54 0z" fill="#000" />
            <path d="M532 387l3 8" stroke="#d01018" />
            <rect x="525" y="295" width="1" height="1" fill="#555" />

            <path d="M728 442l9 24 129-21v26l-135 22-3-5z" fill="#005bb2" />
            <path d="M728 442l135-22 9 24-135 22zM731 493l135-22 6 17-135 23z" fill="#0077ec" />
            <path d="M737 511l135-23v3l-135 21z" fill="#0058b0" />

            <circle cx="801" cy="396.500" r="226" class="ring" />
            <circle v-for="(h, i) in handles" :key="'h' + i" :cx="h[0]" :cy="h[1]" r="14" class="ring" />

            <path d="M294 601l-9-28" stroke="#00f020" stroke-width="4" />
            <path d="M280 571l7-3 3 8-7 1z" fill="#00f020" />
            <path d="M294 601l38-6" stroke="#f00" stroke-width="4" />
            <path d="M330 589l13 4-12 7z" fill="#f00" />
            <path d="M294 600v-26" stroke="#0078f0" stroke-width="4" />
            <path d="M289 576l5-11 5 11z" fill="#0078f0" />
            <path d="M281 562h8l-8 9h8" fill="none" stroke="#2060c0" />
            <path d="M326 580l9 8M335 580l-9 8" stroke="#c01018" />
            <path d="M301 567l-5 6M297 567l2 3" stroke="#00b020" />
          </g>
        </svg>

        <div class="bar snap">
          <div class="strip">
            <template v-for="(t, i) in snapTools" :key="i">
              <i v-if="t.kind === 'grip'" class="grip"></i>
              <button v-else type="button" class="btn" :class="{ on: t.on }"><svg class="ico"><use :href="'#' + t.icon" /><text v-if="t.icon === 'dyn'" x="5" y="14" class="mini">12</text></svg>{{ t.label }}</button>
            </template>
          </div>
        </div>
      </main>
    </div>
    <footer class="status"><span class="w148"></span><span class="w80"></span><span class="w100"></span><span class="w50"></span><span class="rest"></span></footer>
  </div>
</template>

<style>
html, body { margin: 0; background: #f0f0f0; }
</style>
<style scoped>
.defs { position: absolute; width: 0; height: 0; }
.app { display: flex; flex-direction: column; height: 100vh; overflow: hidden; background: #f0f0f0; color: #111; font: 12px/16px "Open Sans", "Noto Sans CJK SC", sans-serif; white-space: nowrap; }
button, select { font: inherit; color: inherit; border: 0; background: none; padding: 0; margin: 0; white-space: nowrap; }
a { color: #643000; text-decoration: none; }
.head { position: relative; flex: none; }
.menubar { display: flex; align-items: center; height: 24px; margin-bottom: 2px; }
.menus { display: flex; gap: 12px; flex: 0 0 777px; padding-left: 4px; box-sizing: border-box; margin-right: 4px; }
.account { display: flex; flex: 0 0 182px; align-items: center; }
.tip { flex: 0 0 161px; }
.user { display: flex; flex: 0 0 122px; align-items: center; }
.beans { flex: 0 0 51px; }
.more { font: 700 14px/16px "Open Sans", sans-serif; color: #111; padding-bottom: 8px; }
.end { margin-left: auto; margin-right: 3px; }
.toolbar { display: flex; height: 30px; }
.group { display: flex; align-items: center; background: linear-gradient(#fafafa, #f0f0f0); }
.files { flex: 0 0 148px; }
.files .sep { margin-right: 3px; height: 24px; }
.defines { flex: 0 0 549px; padding-left: 3px; box-sizing: border-box; }
.views { flex: 1; padding-left: 4px; min-width: 0; }
.ico { width: 16px; height: 16px; flex: none; display: block; }
.mini { font: 700 8px "Liberation Sans", sans-serif; }
.btn { display: flex; align-items: center; gap: 4px; height: 22px; padding: 0 3px; border: 1px solid transparent; flex: none; }
.btn.tight { padding-right: 0; border-right: 0; }
.btn.off { color: #8c8c8c; }
.btn.on { background: #d9eafa; border-color: #2a78b8; }
.icon-btn { padding: 0 3px; flex: none; }
.caret { flex: none; width: 12px; height: 3px; background: #111; clip-path: polygon(3px 0, 9px 0, 6px 3px); }
.tight + .caret { width: 10px; }
.sep { flex: none; width: 1px; height: 18px; margin-left: 3px; background: #c4c4c4; }
.grip { flex: none; width: 2px; height: 15px; margin: 0 1px 0 4px; background: repeating-linear-gradient(#b4b4b4 0 2px, transparent 2px 4px); }
.popup { position: absolute; z-index: 2; top: 7px; right: 63px; width: 52px; box-shadow: 1px 3px 6px #0006; }
.popup-title { display: flex; align-items: center; justify-content: space-between; height: 25px; padding-left: 3px; background: #fff; color: #999; }
.popup-x { width: 18px; height: 19px; background: #ececec; color: #fff; }
.popup-go { display: block; width: 100%; height: 23px; background: #f0f0f0; border: 2px solid #666; border-top-color: #888; border-left-color: #888; }
.body { display: flex; flex: 1; min-height: 0; }
.side { display: flex; flex-direction: column; flex: 0 0 234px; margin-top: 2px; padding-bottom: 1px; box-sizing: border-box; }
.side-title { display: flex; align-items: center; gap: 8px; height: 16px; margin-bottom: 1px; padding-right: 4px; background: #0052e0; color: #fff; font-size: 13px; overflow: hidden; }
.side-name { flex: 1; margin-left: -4px; }
.side-ico { width: 10px; height: 10px; }
.side-btn { flex: none; height: 22px; margin-right: 1px; border-bottom: 1px solid #a0a0a0; border-right: 1px solid #a0a0a0; background: #f0f0f0; }
.side-strip { display: flex; align-items: center; height: 28px; padding-left: 2px; margin-right: 1px; border-right: 1px solid #bbb; background: linear-gradient(#fcfcfc, #f2f2f2); }
.tree { flex: 1; min-height: 0; margin: 0 1px 0 0; padding: 0; list-style: none; background: #fff; border: 1px solid #828790; overflow: hidden; }
.node { display: flex; align-items: center; height: 16px; }
.lv1 { padding-left: 6px; }
.lv2 { padding-left: 31px; background: repeating-linear-gradient(#999 0 1px, #fff 1px 2px) 12px 0 / 1px 16px no-repeat; }
.lv2 .stub { width: 10px; height: 16px; border-left: 1px dotted #888; background: repeating-linear-gradient(90deg, #999 0 1px, transparent 1px 2px) 0 8px / 10px 1px no-repeat; }
.lv2.last .stub { height: 8px; margin-bottom: 8px; background-position: 0 7px; }
.lv1 .stub { width: 4px; height: 1px; margin: 0 1px 0 2px; border-top: 1px dotted #888; }
.twist { width: 10px; height: 10px; fill: none; stroke: #a0a0a0; stroke-width: 1.5; }
.twist.open { stroke: #333; }
.cap { display: flex; align-items: center; gap: 4px; height: 16px; }
.sel { background: #d6d6d6; }
.txt { display: flex; align-items: center; }
.key { font: 10px/16px "Liberation Mono", monospace; }
.book { margin-left: 1px; }
.fresh { font: 700 9px/8px "Open Sans", sans-serif; background: #ffe63c; margin: 0 0 6px 1px; }
.main { display: flex; flex-direction: column; flex: 1; min-width: 0; }
.bar { display: flex; flex: 0 0 29px; padding-left: 5px; box-sizing: border-box; }
.bar:nth-child(2) { flex-basis: 28px; }
.strip { display: flex; align-items: center; padding-right: 5px; background: linear-gradient(#fcfcfc, #f1f1f1); }
.draw0 { padding-right: 24px; }
.member1 { margin-left: 68px; padding-right: 0; }
.combo { display: flex; align-items: center; width: 72px; height: 22px; background: #fff; }
.combo.small { width: 60px; }
.combo.narrow { width: 56px; }
.combo select { flex: 1; min-width: 0; appearance: none; padding-left: 3px; outline: 0; }
.scene { display: block; flex: 1; min-height: 0; margin-left: 5px; background: #000; overflow: hidden; }
.thin { fill: none; shape-rendering: crispEdges; }
.cad { fill: #d8d8d8; font: 15px Roboto, sans-serif; text-anchor: middle; }
.ring { fill: none; stroke: #fff; stroke-opacity: .55; stroke-width: 1; shape-rendering: crispEdges; }
.status { display: flex; flex: 0 0 5px; gap: 2px; }
.status span { height: 6px; margin-top: 1px; box-sizing: border-box; border: 1px solid #d0d0d0; background: #fafafa; }
.w148 { width: 146px; }
.w80 { width: 78px; }
.w100 { width: 98px; }
.w50 { width: 48px; }
.rest { flex: 1; }
</style>
